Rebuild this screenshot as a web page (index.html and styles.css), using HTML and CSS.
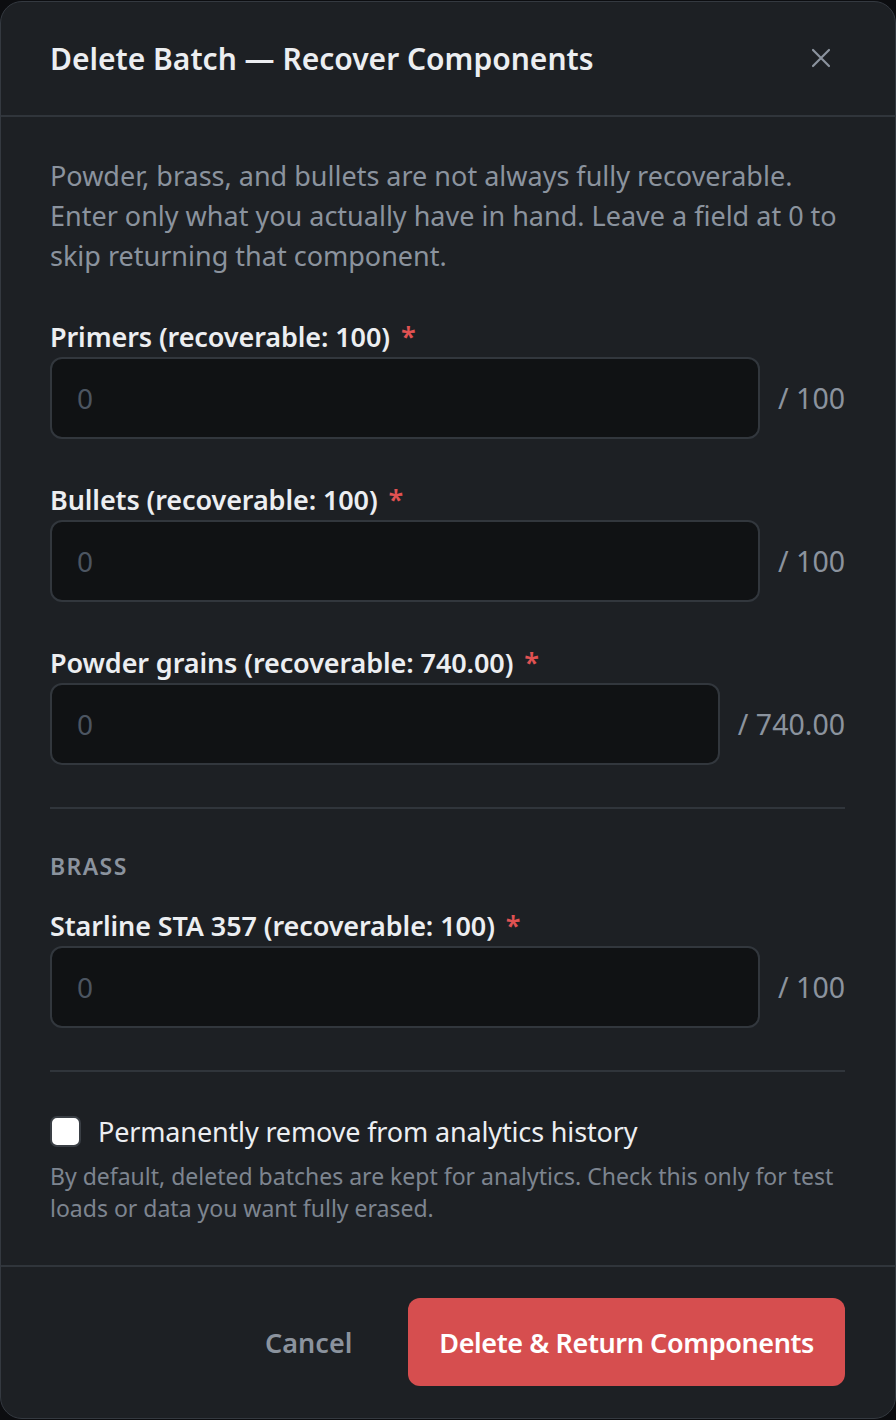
FILE: index.html
```html
<!DOCTYPE html>
<html lang="en">
<head>
<meta charset="utf-8">
<title>Delete Batch</title>
<link rel="stylesheet" href="styles.css">
</head>
<body>
<div class="modal">
  <header class="modal-header">
    <h2 class="title">Delete Batch — Recover Components</h2>
    <button class="close" aria-label="Close">
      <svg width="22" height="22" viewBox="0 0 22 22" fill="none" stroke="currentColor" stroke-width="2.2" stroke-linecap="round"><path d="M3 3L19 19M19 3L3 19"/></svg>
    </button>
  </header>
  <div class="modal-body">
    <p class="intro">Powder, brass, and bullets are not always fully recoverable. Enter only what you actually have in hand. Leave a field at 0 to skip returning that component.</p>

    <div class="field">
      <label class="label">Primers (recoverable: 100) <span class="req">*</span></label>
      <div class="input-row">
        <div class="input"><span class="ph">0</span></div>
        <span class="max">/ 100</span>
      </div>
    </div>

    <div class="field">
      <label class="label">Bullets (recoverable: 100) <span class="req">*</span></label>
      <div class="input-row">
        <div class="input"><span class="ph">0</span></div>
        <span class="max">/ 100</span>
      </div>
    </div>

    <div class="field">
      <label class="label">Powder grains (recoverable: 740.00) <span class="req">*</span></label>
      <div class="input-row">
        <div class="input"><span class="ph">0</span></div>
        <span class="max">/ 740.00</span>
      </div>
    </div>

    <hr class="divider">

    <section class="brass">
      <div class="section-title">BRASS</div>
      <div class="field">
        <label class="label">Starline STA 357 (recoverable: 100) <span class="req">*</span></label>
        <div class="input-row">
          <div class="input"><span class="ph">0</span></div>
          <span class="max">/ 100</span>
        </div>
      </div>
    </section>

    <hr class="divider">

    <div class="check-block">
      <label class="check-row">
        <span class="checkbox"></span>
        <span class="check-label">Permanently remove from analytics history</span>
      </label>
      <p class="help">By default, deleted batches are kept for analytics. Check this only for test loads or data you want fully erased.</p>
    </div>
  </div>
  <footer class="modal-footer">
    <button class="btn-cancel">Cancel</button>
    <button class="btn-danger">Delete &amp; Return Components</button>
  </footer>
</div>
</body>
</html>
```

FILE: styles.css
```css
* { box-sizing: border-box; }
html, body {
  margin: 0;
  padding: 0;
  background: #0c0d10;
  height: 1420px;
  overflow: hidden;
}
body {
  font-family: "Noto Sans", "Liberation Sans", sans-serif;
  color: #eceef1;
  padding-top: 1px;
}
.modal {
  width: 896px;
  height: 1418px;
  background: #1d2024;
  border: 1px solid #343940;
  border-radius: 22px;
  display: flex;
  flex-direction: column;
  overflow: hidden;
}
.modal-header {
  height: 115px;
  flex: none;
  display: flex;
  align-items: center;
  justify-content: space-between;
  padding: 0 63px 0 49px;
  border-bottom: 2px solid #30353b;
}
.title {
  margin: 0;
  font-size: 30px;
  font-weight: 600;
  color: #eceef1;
}
.close {
  background: none;
  border: 0;
  padding: 0;
  color: #8b939e;
  display: flex;
  margin-top: -2px;
}
.modal-body {
  flex: 1;
  min-height: 0;
  padding: 39px 50px 30px 49px;
  display: flex;
  flex-direction: column;
  gap: 43px;
}
.intro {
  margin: 0;
  font-size: 27px;
  line-height: 40px;
  color: #8b939e;
}
.field {
  display: flex;
  flex-direction: column;
  gap: 2px;
}
.label {
  font-size: 27px;
  line-height: 36px;
  font-weight: 600;
  color: #eceef1;
  letter-spacing: -0.1px;
}
.req { color: #e05252; margin-left: 4px; }
.input-row {
  display: flex;
  align-items: center;
  gap: 18px;
}
.input {
  flex: 1;
  height: 82px;
  background: #101214;
  border: 2px solid #32373d;
  border-radius: 12px;
  display: flex;
  align-items: center;
  padding-left: 25px;
}
.ph {
  font-size: 28px;
  color: #4c5561;
}
.max {
  font-size: 28.5px;
  color: #8b939e;
}
.divider {
  margin: -1px 0;
  border: 0;
  border-top: 2px solid #30353b;
}
.brass {
  display: flex;
  flex-direction: column;
  gap: 27px;
}
.section-title {
  font-size: 23px;
  line-height: 30px;
  font-weight: 600;
  color: #8b939e;
  letter-spacing: 1.4px;
}
.check-block {
  display: flex;
  flex-direction: column;
  gap: 11px;
  margin-top: -1px;
}
.check-row {
  display: flex;
  align-items: center;
  gap: 17px;
  height: 36px;
}
.checkbox {
  width: 31px;
  height: 31px;
  background: #ffffff;
  border: 2px solid #3a3f45;
  border-radius: 7px;
  flex: none;
}
.check-label {
  font-size: 27px;
  color: #eceef1;
  letter-spacing: -0.15px;
}
.help {
  margin: 0;
  font-size: 23px;
  line-height: 32px;
  color: #7d8590;
}
.modal-footer {
  flex: none;
  border-top: 2px solid #30353b;
  padding: 31px 50px 32px 50px;
  display: flex;
  justify-content: flex-end;
  gap: 24px;
}
.btn-cancel {
  background: none;
  border: 0;
  font-family: inherit;
  font-size: 27px;
  font-weight: 600;
  color: #8b939e;
  padding: 0 32px;
}
.btn-danger {
  font-family: inherit;
  background: #d64e4f;
  color: #ffffff;
  border: 0;
  border-radius: 12px;
  height: 88px;
  padding: 0 31px;
  font-size: 27px;
  font-weight: 600;
  letter-spacing: -0.4px;
}
```
